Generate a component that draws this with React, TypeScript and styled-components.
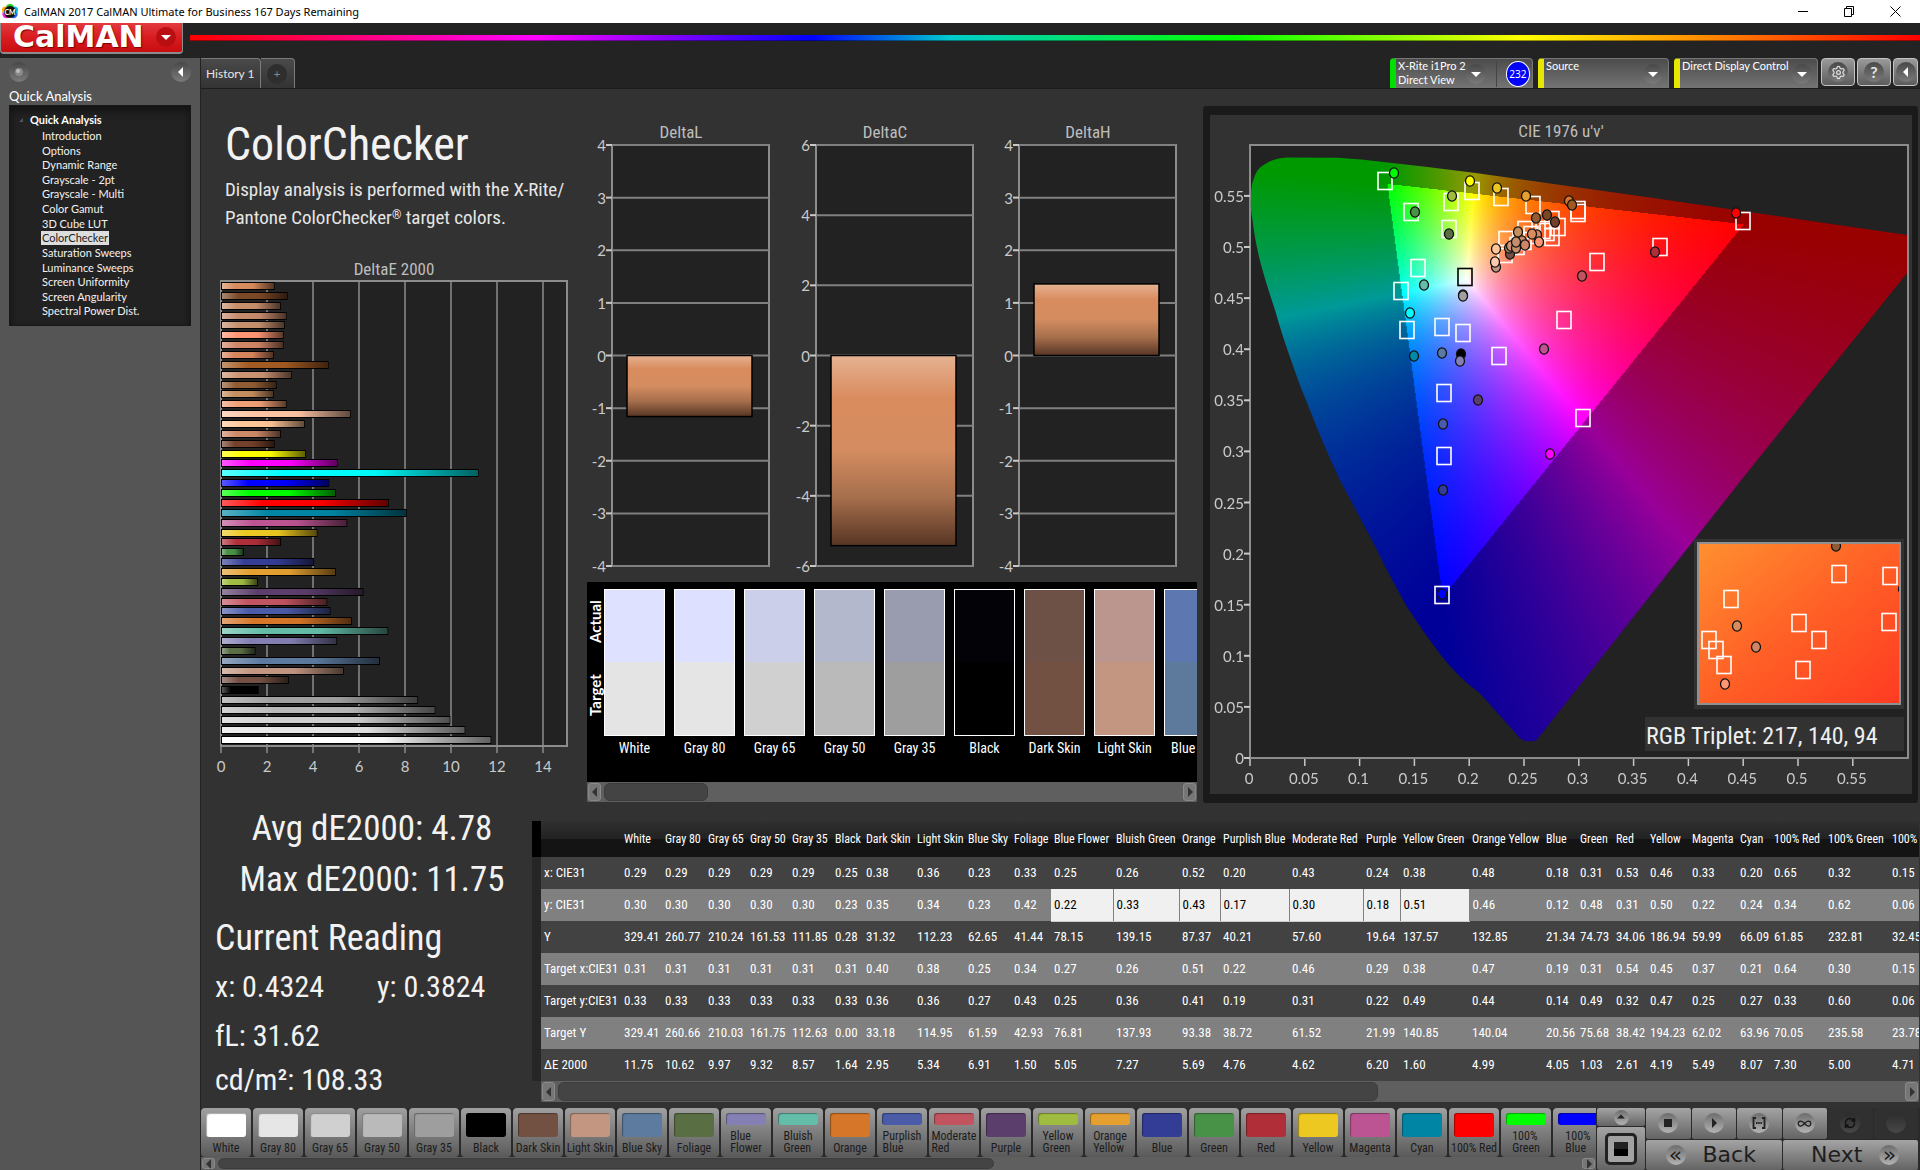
import React, { useEffect, useRef } from 'react';
import styled, { createGlobalStyle, css } from 'styled-components';
import { Settings, RefreshCw, Infinity as InfinityIcon } from 'lucide-react';

const cond = '"Roboto Condensed", "Liberation Sans Narrow", Lato, sans-serif';
const ui = 'Lato, "Open Sans", sans-serif';

const Global = createGlobalStyle`
  * { box-sizing: border-box; }
  body { margin: 0; background: #232323; font-family: ${ui}; color: #e6e6e6; }
  button { font: inherit; color: inherit; border: 0; padding: 0; margin: 0; background: none; }
  ul { list-style: none; margin: 0; padding: 0; }
  h1, h2, p { margin: 0; font-weight: 400; }
`;

/* ---------- shell ---------- */
const App_ = styled.div`
  display: flex;
  flex-direction: column;
  min-height: 100vh;
  overflow: hidden;
`;
const TitleBar = styled.header`
  display: flex;
  align-items: center;
  height: 23px;
  padding: 0 18px 0 2px;
  gap: 6px;
  background: #fff;
  color: #000;
  font: 11px/22px "Noto Sans", sans-serif;
`;
const AppName = styled.span`
  flex: 1;
`;
const WinButtons = styled.div`
  display: flex;
  gap: 33px;
`;
const WinButton = styled.button`
  display: flex;
  width: 13px;
  height: 20px;
  align-items: center;
  justify-content: center;
`;
const Brand = styled.div`
  display: flex;
  height: 35px;
  gap: 7px;
  background: #232323;
`;
const Logo = styled.button`
  display: flex;
  align-items: center;
  justify-content: space-between;
  width: 183px;
  height: 31px;
  padding: 0 6px 1px 12px !important;
  background: linear-gradient(#e23a3e, #d81c20 50%, #c80d10) !important;
  border: solid #8c8c8c !important;
  border-width: 0 1px 2px 1px !important;
  border-radius: 0 0 4px 4px;
  font: 700 30px/28px "DejaVu Sans", sans-serif !important;
  color: #fff !important;
  text-shadow: 1px 1px 1px #700;
`;
const Rainbow = styled.div`
  flex: 1;
  height: 6px;
  margin-top: 12px;
  border-bottom: 1px solid rgba(0, 0, 0, 0.4);
  background: linear-gradient(90deg, #f00 0, #f0f 20%, #00f 36%, #0cc 44%, #0f0 60%, #ff0 77%, #f00 100%);
`;
const Body = styled.div`
  display: flex;
  flex: 1;
`;

/* ---------- sidebar ---------- */
const Side = styled.aside`
  width: 200px;
  flex: none;
  padding: 4px 9px;
  background: #555;
`;
const SideTop = styled.div`
  display: flex;
  justify-content: space-between;
  align-items: center;
  height: 20px;
`;
const SideTitle = styled.h2`
  margin-top: 5px;
  font-size: 13px;
  line-height: 18px;
  color: #fff;
`;
const Tree = styled.div`
  height: 221px;
  padding: 7px 10px 7px 14px;
  background: #222;
  border: 1px solid #181818;
  box-shadow: inset 0 4px 8px #111;
`;
const TreeRoot = styled.div`
  display: flex;
  align-items: center;
  gap: 6px;
  height: 14px;
  margin-left: -6px;
  font: 700 11px/14px ${ui};
  color: #fff;
`;
const TreeList = styled.ul`
  display: grid;
  height: 192px;
  grid-auto-rows: 1fr;
  padding: 2px 0 0 17px !important;
  font-size: 11px;
  line-height: 14px;
`;
const TreeLink = styled.a<{ $on?: boolean }>`
  display: inline-block;
  padding: 0 1px;
  text-decoration: none;
  color: ${(p) => (p.$on ? '#222' : '#f2f2f2')};
  background: ${(p) => (p.$on ? '#ddd' : 'transparent')};
`;
const Knob = styled.span<{ $s?: number; $tone?: string }>`
  display: flex;
  flex: none;
  align-items: center;
  justify-content: center;
  width: ${(p) => p.$s ?? 20}px;
  height: ${(p) => p.$s ?? 20}px;
  border-radius: 50%;
  background: ${(p) => p.$tone ?? 'linear-gradient(#484848, #7a7a7a)'};
`;
const PlusKnob = styled(Knob)`
  background: #2e2e2e;
  color: #888;
`;
const PaleKnob = styled(Knob)<{ $off?: boolean }>`
  background: ${(p) => (p.$off ? 'linear-gradient(#2c2c2c,#484848)' : 'linear-gradient(#6c6c6c,#b4b4b4)')};
`;
const KnobButton = styled.button`
  display: flex;
`;

/* ---------- main ---------- */
const Main = styled.main`
  display: flex;
  flex: 1;
  min-width: 0;
  flex-direction: column;
  border-left: 1px solid #222;
  background: #323232;
`;
const TopBar = styled.div`
  display: flex;
  justify-content: space-between;
  height: 31px;
  background: #232323;
  border-bottom: 1px solid #1c1c1c;
`;
const Tabs = styled.div`
  display: flex;
`;
const Tab = styled.button`
  display: flex;
  align-items: center;
  justify-content: center;
  height: 30px;
  padding: 0 5px !important;
  min-width: 34px;
  background: linear-gradient(#4a4a4a, #333) !important;
  border: solid #7b7b7b !important;
  border-width: 1px 1px 0 0 !important;
  border-radius: 0 4px 0 0;
  font-size: 12px !important;
`;
const Tools = styled.div`
  display: flex;
`;
const Device = styled.button<{ $c: string; $w: number; $p?: number; $gap?: number }>`
  display: flex;
  width: ${(p) => p.$w}px;
  height: 30px;
  margin-right: ${(p) => p.$gap ?? 5}px !important;
  padding: 0 ${(p) => p.$p ?? 5}px 0 2px !important;
  border: solid #777 !important;
  border-width: 1px 1px 0 0 !important;
  border-left: 6px solid ${(p) => p.$c} !important;
  border-radius: 4px 4px 0 0;
  background: linear-gradient(#4c4c4c, #747474) !important;
  font-size: 11px !important;
  line-height: 14px !important;
  color: #fff !important;
  text-align: left;
  align-items: center;
  white-space: nowrap;
`;
const DeviceName = styled.span`
  flex: 1;
  align-self: flex-start;
`;
const Badge = styled.span`
  display: flex;
  align-items: center;
  justify-content: center;
  width: 26px;
  height: 26px;
  margin-left: 9px;
  border: 1px solid #fff;
  border-radius: 50%;
  background: #00f;
  font: 10px "Noto Sans", sans-serif;
`;
const Divider = styled.span`
  width: 1px;
  height: 26px;
  margin-left: 10px;
  background: #444;
`;
const ToolButton = styled.button<{ $w?: number }>`
  display: flex;
  align-items: center;
  justify-content: center;
  width: ${(p) => p.$w ?? 34}px;
  height: 28px;
  margin-right: 2px !important;
  border: 1px solid #c4c4c4 !important;
  border-radius: 4px;
  background: linear-gradient(#9a9a9a, #5c5c5c) !important;
  font: 700 16px/20px Lato, sans-serif !important;
`;
const Upper = styled.div`
  display: flex;
  padding: 17px 2px 0 0;
`;
const LeftCol = styled.section`
  width: 386px;
  flex: none;
`;
const Intro = styled.div`
  height: 148px;
  padding: 6px 0 0 24px;
  font-family: ${cond};
`;
const Heading = styled.h1`
  font-size: 46px;
  line-height: 64px;
  color: #f2f2f2;
`;
const Lead = styled.p`
  font-size: 19px;
  line-height: 28px;
  white-space: nowrap;
`;
const Mark = styled.span`
  font-size: 12px;
  line-height: 12px;
  vertical-align: 5px;
`;
const MidCol = styled.section`
  width: 610px;
  flex: none;
  margin-right: 6px;
`;
const Chart = styled.svg`
  display: block;
  width: 100%;
  height: auto;
`;

/* swatches */
const Strip = styled.div`
  display: flex;
  height: 200px;
  padding-top: 7px;
  overflow: hidden;
  background: #000;
`;
const Sides = styled.div`
  display: grid;
  flex: none;
  width: 17px;
  height: 147px;
  grid-template-rows: 66px 1fr;
`;
const SideLabel = styled.span`
  writing-mode: vertical-rl;
  transform: rotate(180deg);
  text-align: center;
  font: 700 15px/17px ${ui};
  color: #fff;
`;
const Patch = styled.figure`
  flex: none;
  width: 61px;
  margin: 0 9px 0 0;
  text-align: center;
  white-space: nowrap;
  font: 14px/24px ${cond};
  color: #fff;
`;
const PatchColor = styled.div<{ $a: string; $t: string }>`
  height: 147px;
  border: 1px solid #fff;
  background: linear-gradient(${(p) => p.$a} 50%, ${(p) => p.$t} 50%);
`;

/* scrollbars */
const Bar = styled.div<{ $h: number }>`
  display: flex;
  align-items: center;
  justify-content: space-between;
  gap: 3px;
  height: ${(p) => p.$h}px;
  padding: 1px;
  background: #5f5f5f;
`;
const BarButton = styled.button`
  display: flex;
  align-items: center;
  justify-content: center;
  width: 13px;
  height: 100%;
  border: 1px solid #8a8a8a !important;
  border-radius: 3px;
  background: #767676 !important;
`;
const Track = styled.div`
  flex: 1;
  height: 100%;
`;
const Thumb = styled.div<{ $w: string }>`
  width: ${(p) => p.$w};
  height: 100%;
  border-radius: 6px;
  background: #444;
  border: 1px solid #3c3c3c;
`;

const CiePanel = styled.section`
  flex: 1;
  min-width: 0;
  padding: 9px 6px 9px 7px;
  background: #1a1a1a;
  border-radius: 3px;
`;
const CieInner = styled.div`
  background: #323232;
`;
const Spectrum = styled.canvas`
  display: block;
  width: 100%;
  height: 100%;
`;

/* lower */
const Lower = styled.div`
  display: flex;
  height: 305px;
`;
const Readings = styled.section`
  width: 331px;
  flex: none;
  padding-left: 14px;
  font-family: ${cond};
  color: #f2f2f2;
`;
const Stat = styled.p`
  margin-left: 14px;
  width: 286px;
  text-align: center;
  font-size: 35px;
  line-height: 51px;
`;
const Reading = styled.p<{ $h: number; $s?: number }>`
  display: flex;
  font-size: ${(p) => p.$s ?? 30}px;
  line-height: ${(p) => p.$h}px;
`;
const Half = styled.span`
  width: 162px;
`;
const TableArea = styled.section`
  flex: 1;
  min-width: 0;
  display: flex;
  padding-top: 18px;
`;
const Gutter = styled.div`
  width: 9px;
  flex: none;
  height: 260px;
  background: linear-gradient(#000 0 36px, #262626 36px);
`;
const TableScroll = styled.div`
  flex: 1;
  min-width: 0;
  margin-right: 1px;
  overflow: hidden;
`;
const Table = styled.table`
  width: 1418px;
  table-layout: fixed;
  border-collapse: collapse;
  font: 13px/20px ${cond};
  color: #fff;
  th, td {
    height: 32px;
    padding: 0 0 0 3px;
    font-weight: 400;
    text-align: left;
    white-space: nowrap;
  }
  thead th {
    height: 36px;
    font-size: 12px;
  }
  thead tr {
    background: linear-gradient(#303030, #222 50%, #141414 51%, #141414);
  }
`;
const Row = styled.tr<{ $alt: boolean }>`
  background: ${(p) => (p.$alt ? '#808080' : '#424242')};
`;
const Cell = styled.td<{ $sel?: boolean }>`
  ${(p) =>
    p.$sel &&
    css`
      background: #f0f0f0;
      color: #000;
      border-right: 1px solid #808080;
      border-bottom: 1px solid #ccc;
    `}
`;

/* bottom */
const Footer = styled.footer`
  display: flex;
  flex: 1;
  min-height: 62px;
  padding-right: 2px;
  gap: 1px;
  background: #2a2a2a;
`;
const Palette = styled.div`
  flex: 1;
  min-width: 0;
`;
const PaletteRow = styled.div`
  display: flex;
  gap: 2px;
  overflow: hidden;
`;
const ColorButton = styled.button`
  display: flex;
  flex: none;
  flex-direction: column;
  align-items: center;
  justify-content: space-between;
  width: 50px;
  height: 49px;
  padding: 5px 0 3px !important;
  border-radius: 4px;
  background: linear-gradient(#a0a0a0, #5a5a5a) !important;
  font: 12px/12px ${cond} !important;
  color: #1c1c1c !important;
`;
const Chip = styled.span<{ $c: string }>`
  width: 40px;
  flex: 1;
  border-radius: 3px;
  background: ${(p) => p.$c};
  box-shadow: inset 1px 1px 1px rgba(0, 0, 0, 0.35);
`;
const ChipLabel = styled.span`
  padding-top: 5px;
  text-align: left;
`;
const Source = styled.div`
  display: grid;
  width: 48px;
  grid-template-rows: 18px 1fr;
  gap: 1px;
`;
const Metal = styled.button<{ $off?: boolean; $pad?: string }>`
  display: flex;
  align-items: center;
  justify-content: center;
  gap: 17px;
  padding: ${(p) => p.$pad ?? '0'} !important;
  border-radius: 2px;
  background: ${(p) => (p.$off ? '#303030' : 'linear-gradient(#a4a4a4, #646464)')} !important;
  font: 22px/28px "DejaVu Sans", sans-serif !important;
  color: #1e1e1e !important;
`;
const Frame = styled.span`
  display: flex;
  align-items: center;
  justify-content: center;
  width: 32px;
  height: 32px;
  border: 3px solid #222;
  border-radius: 5px;
  background: #a2a2a2;
`;
const Block = styled.span`
  width: 14px;
  height: 14px;
  background: linear-gradient(#222 50%, #000 50%);
`;
const Transport = styled.div`
  display: grid;
  width: 272px;
  grid-template-columns: repeat(6, 1fr);
  grid-template-rows: 1fr 1fr;
  gap: 1px;
  ${Metal}:nth-child(n + 7) {
    grid-column: span 3;
  }
`;

/* ---------- data ---------- */
const deltaE: [string, number][] = [
  ['#d98c5e', 2.33], ['#7b4826', 2.9], ['#c78e6b', 2.6], ['#c68a6c', 2.85], ['#c6906c', 2.77],
  ['#ff9673', 2.72], ['#d08666', 2.72], ['#d9855e', 2.29], ['#a35a22', 4.68], ['#cb9372', 3.07],
  ['#915c33', 2.42], ['#c58e5e', 2.29], ['#f0a075', 2.85], ['#ffc5a5', 5.64], ['#ffc798', 3.64],
  ['#cc8a68', 2.6], ['#74402a', 2.33], ['#ffff00', 3.68], ['#ff00ff', 5.07], ['#00ffff', 11.2],
  ['#0000ff', 4.71], ['#00ff00', 5], ['#ff0000', 7.3], ['#0086a4', 8.07], ['#bc5493', 5.49],
  ['#ecc820', 4.19], ['#b02e38', 2.61], ['#489247', 1], ['#343d96', 4.05], ['#e5a030', 4.99],
  ['#a0bc40', 1.6], ['#5c3e6c', 6.2], ['#c2545f', 4.62], ['#4a5ba8', 4.76], ['#d67628', 5.69],
  ['#64bda8', 7.27], ['#8580b4', 5.05], ['#5a6e44', 1.5], ['#5c7a9f', 6.91], ['#c39681', 5.34],
  ['#735043', 2.95], ['#000000', 1.64], ['#a0a0a0', 8.57], ['#bababa', 9.32], ['#d0d0d0', 9.97],
  ['#e6e6e6', 10.62], ['#ffffff', 11.75],
];

const patches: [string, string, string][] = [
  ['White', '#dee1ff', '#e4e4e4'], ['Gray 80', '#dde1ff', '#e5e5e5'], ['Gray 65', '#cbcfe9', '#d0d0d0'],
  ['Gray 50', '#b3b8cd', '#bababa'], ['Gray 35', '#999caf', '#9e9e9e'], ['Black', '#020207', '#000'],
  ['Dark Skin', '#6d5046', '#735142'], ['Light Skin', '#ba968e', '#c39681'], ['Blue Sky', '#5d78b0', '#5d7a9c'],
];

const columns: [string, number, string[]][] = [
  ['White', 41, ['0.29', '0.30', '329.41', '0.31', '0.33', '329.41', '11.75']],
  ['Gray 80', 43, ['0.29', '0.30', '260.77', '0.31', '0.33', '260.66', '10.62']],
  ['Gray 65', 42, ['0.29', '0.30', '210.24', '0.31', '0.33', '210.03', '9.97']],
  ['Gray 50', 42, ['0.29', '0.30', '161.53', '0.31', '0.33', '161.75', '9.32']],
  ['Gray 35', 43, ['0.29', '0.30', '111.85', '0.31', '0.33', '112.63', '8.57']],
  ['Black', 31, ['0.25', '0.23', '0.28', '0.31', '0.33', '0.00', '1.64']],
  ['Dark Skin', 51, ['0.38', '0.35', '31.32', '0.40', '0.36', '33.18', '2.95']],
  ['Light Skin', 51, ['0.36', '0.34', '112.23', '0.38', '0.36', '114.95', '5.34']],
  ['Blue Sky', 46, ['0.23', '0.23', '62.65', '0.25', '0.27', '61.59', '6.91']],
  ['Foliage', 40, ['0.33', '0.42', '41.44', '0.34', '0.43', '42.93', '1.50']],
  ['Blue Flower', 62, ['0.25', '0.22', '78.15', '0.27', '0.25', '76.81', '5.05']],
  ['Bluish Green', 66, ['0.26', '0.33', '139.15', '0.26', '0.36', '137.93', '7.27']],
  ['Orange', 41, ['0.52', '0.43', '87.37', '0.51', '0.41', '93.38', '5.69']],
  ['Purplish Blue', 69, ['0.20', '0.17', '40.21', '0.22', '0.19', '38.72', '4.76']],
  ['Moderate Red', 74, ['0.43', '0.30', '57.60', '0.46', '0.31', '61.52', '4.62']],
  ['Purple', 37, ['0.24', '0.18', '19.64', '0.29', '0.22', '21.99', '6.20']],
  ['Yellow Green', 69, ['0.38', '0.51', '137.57', '0.38', '0.49', '140.85', '1.60']],
  ['Orange Yellow', 74, ['0.48', '0.46', '132.85', '0.47', '0.44', '140.04', '4.99']],
  ['Blue', 34, ['0.18', '0.12', '21.34', '0.19', '0.14', '20.56', '4.05']],
  ['Green', 36, ['0.31', '0.48', '74.73', '0.31', '0.49', '75.68', '1.03']],
  ['Red', 34, ['0.53', '0.31', '34.06', '0.54', '0.32', '38.42', '2.61']],
  ['Yellow', 42, ['0.46', '0.50', '186.94', '0.45', '0.47', '194.23', '4.19']],
  ['Magenta', 48, ['0.33', '0.22', '59.99', '0.37', '0.25', '62.02', '5.49']],
  ['Cyan', 34, ['0.20', '0.24', '66.09', '0.21', '0.27', '63.96', '8.07']],
  ['100% Red', 54, ['0.65', '0.34', '61.85', '0.64', '0.33', '70.05', '7.30']],
  ['100% Green', 64, ['0.32', '0.62', '232.81', '0.30', '0.60', '235.58', '5.00']],
  ['100% Blue', 70, ['0.15', '0.06', '32.45', '0.15', '0.06', '23.78', '4.71']],
];
const rowNames = ['x: CIE31', 'y: CIE31', 'Y', 'Target x:CIE31', 'Target y:CIE31', 'Target Y', 'ΔE 2000'];

const palette: [string, string][] = [
  ['White', '#fff'], ['Gray 80', '#e6e6e6'], ['Gray 65', '#d0d0d0'], ['Gray 50', '#bababa'], ['Gray 35', '#9e9e9e'],
  ['Black', '#000'], ['Dark Skin', '#735142'], ['Light Skin', '#c39681'], ['Blue Sky', '#5d7a9f'], ['Foliage', '#5a6e44'],
  ['Blue\nFlower', '#8580b4'], ['Bluish\nGreen', '#64bda8'], ['Orange', '#d67628'], ['Purplish\nBlue', '#4a5ba8'],
  ['Moderate\nRed', '#c2545f'], ['Purple', '#5c3e6c'], ['Yellow\nGreen', '#a0bc40'], ['Orange\nYellow', '#e5a030'],
  ['Blue', '#343d96'], ['Green', '#489247'], ['Red', '#b02e38'], ['Yellow', '#ecc820'], ['Magenta', '#bc5493'],
  ['Cyan', '#0086a4'], ['100% Red', '#f00'], ['100%\nGreen', '#0f0'], ['100%\nBlue', '#00f'],
];

const targets: [number, number][] = [
  [135, 36], [222, 46], [251, 52], [201, 57], [161, 67], [283, 60], [328, 65], [328, 68], [199, 84], [493, 76],
  [410, 102], [347, 117], [168, 123], [151, 146], [157, 185], [192, 182], [213, 188], [314, 175], [249, 211],
  [194, 248], [333, 273], [194, 311], [192, 450], [302, 75], [308, 82], [302, 92], [275, 85], [256, 95],
  [255, 109], [267, 101], [281, 90], [274, 96], [293, 85], [297, 87],
];
const readings: [number, number, string][] = [
  [144, 28, '#00ff00'], [220, 36, '#ffff00'], [247, 43, '#ecc820'], [202, 51, '#a0bc40'], [276, 51, '#e5a030'],
  [319, 56, '#d67628'], [322, 60, '#a35a22'], [165, 67, '#489247'], [486, 68, '#ff0000'], [199, 89, '#5a6e44'],
  [297, 70, '#7b4826'], [286, 73, '#915c33'], [305, 77, '#74402a'], [268, 87, '#c58e5e'], [287, 90, '#d9855e'],
  [282, 89, '#d98c5e'], [289, 97, '#ff9673'], [272, 96, '#c68a6c'], [260, 109, '#735043'], [259, 103, '#a87a5c'],
  [261, 101, '#cb9372'], [266, 103, '#c6906c'], [275, 100, '#d08666'], [266, 97, '#c78e6b'], [246, 104, '#ffc798'],
  [246, 122, '#c39681'], [245, 117, '#ffcbb0'], [405, 107, '#b02e38'], [332, 131, '#c2545f'], [174, 140, '#64bda8'],
  [213, 150, '#808080'], [213, 151, '#a0a0a0'], [160, 168, '#00ffff'], [164, 211, '#008aa8'], [192, 208, '#5c7a9f'],
  [211, 209, '#000'], [210, 216, '#8580b4'], [294, 204, '#bc5493'], [228, 255, '#5c3e6c'], [193, 279, '#4a5ba8'],
  [300, 309, '#ff00ff'], [193, 345, '#343d96'], [192, 449, '#0000ff'],
];
const insetTargets: [number, number][] = [
  [142, 32], [193, 34], [34, 57], [102, 81], [192, 80], [12, 98], [122, 98], [19, 108], [27, 123], [106, 128],
];
const insetReadings: [number, number, string][] = [
  [139, 4, '#915c33'], [40, 84, '#d98c5e'], [59, 105, '#d08666'], [28, 142, '#ff9673'], [206, 47, '#74402a'],
];

/* ---------- charts ---------- */
const axis = { fill: '#cacaca', fontFamily: ui, fontSize: 15 } as const;
const title = { fill: '#bebebe', fontFamily: cond, fontSize: 17, textAnchor: 'middle' } as const;

function DeltaEChart() {
  return (
    <Chart viewBox="0 0 386 530" role="img" aria-label="DeltaE 2000 by colour">
      <defs>
        <linearGradient id="shade">
          <stop offset="0" stopColor="#fff" stopOpacity=".35" />
          <stop offset=".25" stopColor="#fff" stopOpacity="0" />
          <stop offset=".6" stopColor="#000" stopOpacity=".03" />
          <stop offset="1" stopColor="#000" stopOpacity=".62" />
        </linearGradient>
      </defs>
      <text x="193" y="21" {...title}>DeltaE 2000</text>
      <rect x="20" y="27" width="346" height="465" fill="#222" stroke="#8c8c8c" strokeWidth="2" />
      {[0, 2, 4, 6, 8, 10, 12, 14].map((v) => (
        <g key={v}>
          <line x1={20 + v * 23} x2={20 + v * 23} y1={v ? 27 : 492} y2="499" stroke="#8c8c8c" strokeWidth="1.5" />
          <text x={20 + v * 23} y="518" textAnchor="middle" {...axis}>{v}</text>
        </g>
      ))}
      {deltaE.map(([c, v], i) => (
        <g key={i}>
          <rect x="20" y={28 + Math.round(i * 9.86)} width={v * 23} height="8" fill="#000" />
          <rect x="21" y={29 + Math.round(i * 9.86)} width={v * 23 - 2} height="6" fill={c} />
          <rect x="21" y={29 + Math.round(i * 9.86)} width={v * 23 - 2} height="6" fill="url(#shade)" />
        </g>
      ))}
    </Chart>
  );
}

function DeltaPlot({ x, name, max, step, value }: { x: number; name: string; max: number; step: number; value: number }) {
  const ticks: number[] = [];
  for (let v = max; v >= -max; v -= step) ticks.push(v);
  const y = (v: number) => 39 + ((max - v) / (2 * max)) * 421;
  const top = Math.min(y(0), y(value));
  const h = Math.abs(y(value) - y(0));
  return (
    <g transform={`translate(${x} 0)`}>
      <text x="69" y="32" {...title}>{name}</text>
      <rect width="157" y="39" height="421" fill="#222" stroke="#8c8c8c" strokeWidth="2" />
      {ticks.map((v) => (
        <g key={v}>
          <line x1="0" x2="157" y1={y(v)} y2={y(v)} stroke="#808080" strokeWidth="2" />
          <line x1="-6" x2="0" y1={y(v)} y2={y(v)} stroke="#c8c8c8" strokeWidth="2" />
          <text x="-6" y={y(v) + 6} textAnchor="end" {...axis}>{v}</text>
        </g>
      ))}
      <rect x="15" y={top} width="125" height={h} fill="url(#skin)" stroke="#000" strokeWidth="1.5" />
    </g>
  );
}

const locus =
  'M278 596 Q272 597 265 587 L230 548 Q208 532 191 510 Q172 485 156 460 Q138 428 122 395 L90 335 Q72 297 60 265 Q50 242 42 218 Q32 190 25 165 Q14 132 9 112 Q4 90 2.5 75 Q0 62 1 51 Q1 40 4 33 Q7 24 12 21 Q22 13 37 12.500 L88 12.700 Q112 14 134 17 Q180 22 226 28 L404 53 L658 90 L658 128 L492 335 L287 595 Q283 597 278 596 Z';

function paintSpectrum(canvas: HTMLCanvasElement) {
  const w = 658;
  const h = 613;
  canvas.width = w;
  canvas.height = h;
  const buffer = document.createElement('canvas');
  buffer.width = w;
  buffer.height = h;
  const bctx = buffer.getContext('2d')!;
  const img = bctx.createImageData(w, h);
  for (let py = 0; py < h; py++) {
    for (let px = 0; px < w; px++) {
      const u = px / 1096;
      const v = Math.max(0.6 - py / 1022, 0.001);
      const X = (9 * u) / (4 * v);
      const Z = (12 - 3 * u - 20 * v) / (4 * v);
      const r = 3.2406 * X - 1.5372 - 0.4986 * Z;
      const g = -0.9689 * X + 1.8758 + 0.0415 * Z;
      const b = 0.0557 * X - 0.204 + 1.057 * Z;
      const m = Math.max(r, g, b, 0.0001);
      const k = (r < 0 || g < 0 || b < 0 ? 153 : 255) / m;
      const o = (py * w + px) * 4;
      img.data[o] = Math.max(0, r) * k;
      img.data[o + 1] = Math.max(0, g) * k;
      img.data[o + 2] = Math.max(0, b) * k;
      img.data[o + 3] = 255;
    }
  }
  bctx.putImageData(img, 0, 0);
  const ctx = canvas.getContext('2d')!;
  ctx.clip(new Path2D(locus));
  ctx.drawImage(buffer, 0, 0);
}

const Target = ({ x, y, c = '#fff' }: { x: number; y: number; c?: string }) => (
  <rect x={x - 7} y={y - 8.5} width="14" height="17" fill="none" stroke={c} strokeWidth="1.600" />
);
const Dot = ({ x, y, c }: { x: number; y: number; c: string }) => (
  <ellipse cx={x} cy={y} rx="4.500" ry="5.200" fill={c} stroke="#111" strokeWidth="1.300" />
);

function CieChart() {
  const ref = useRef<HTMLCanvasElement>(null);
  useEffect(() => {
    if (ref.current) paintSpectrum(ref.current);
  }, []);
  const steps = Array.from({ length: 12 }, (_, i) => i * 0.05);
  return (
    <Chart viewBox="0 0 702 679" role="img" aria-label="CIE 1976 chromaticity diagram">
      <defs>
        <linearGradient id="insetA" x2="1" y2="1">
          <stop offset="0" stopColor="#ff9030" />
          <stop offset=".5" stopColor="#ff6026" />
          <stop offset="1" stopColor="#ff3a22" />
        </linearGradient>
        <clipPath id="insetClip"><rect width="204" height="163" /></clipPath>
      </defs>
      <text x="351" y="22" {...title}>CIE 1976 u'v'</text>
      <rect x="40" y="30" width="658" height="613" fill="#222" stroke="#8c8c8c" strokeWidth="2" />
      <foreignObject x="40" y="30" width="657" height="613"><Spectrum ref={ref} /></foreignObject>
      {steps.map((v) => (
        <g key={v}>
          <line x1="34" x2="40" y1={643 - v * 1022} y2={643 - v * 1022} stroke="#c8c8c8" strokeWidth="2" />
          <text x="34" y={649 - v * 1022} textAnchor="end" {...axis}>{+v.toFixed(2)}</text>
          <line x1={40 + v * 1096} x2={40 + v * 1096} y1="644" y2="651" stroke="#c8c8c8" strokeWidth="1.500" />
          <text x={39 + v * 1096} y="669" textAnchor="middle" {...axis}>{+v.toFixed(2)}</text>
        </g>
      ))}
      <g transform="translate(40 30)">
        {targets.map(([x, y], i) => <Target key={i} x={x} y={y} />)}
        <Target x={215} y={132} c="#000" />
        {readings.map(([x, y, c], i) => <Dot key={i} x={x} y={y} c={c} />)}
      </g>
      <rect x="484" y="424" width="210" height="170" fill="#323232" />
      <g transform="translate(487 427)" clipPath="url(#insetClip)">
        <rect width="204" height="163" fill="url(#insetA)" />
        {insetTargets.map(([x, y], i) => <Target key={i} x={x} y={y} />)}
        {insetReadings.map(([x, y, c], i) => <Dot key={i} x={x} y={y} c={c} />)}
        <rect x="1" y="1" width="202" height="161" fill="none" stroke="#909090" strokeWidth="2" />
      </g>
      <rect x="435" y="602" width="259" height="34" fill="#323232" />
      <text x="436" y="629" fill="#eee" fontFamily={cond} fontSize="24">RGB Triplet: 217, 140, 94</text>
    </Chart>
  );
}

const Arrow = ({ d, c = '#fff', s = 10 }: { d: 'l' | 'r' | 'd' | 'u'; c?: string; s?: number }) => (
  <svg width={s} height={s} viewBox="0 0 10 10" aria-hidden>
    <path fill={c} d={{ l: 'M7 0V10L2 5Z', r: 'M3 0V10L8 5Z', d: 'M0 3H10L5 8Z', u: 'M0 7H10L5 2Z' }[d]} />
  </svg>
);

function Scrollbar({ h, thumb }: { h: number; thumb: string }) {
  return (
    <Bar $h={h}>
      <BarButton aria-label="Scroll left"><Arrow d="l" c="#333" /></BarButton>
      <Track><Thumb $w={thumb} /></Track>
      <BarButton aria-label="Scroll right"><Arrow d="r" c="#333" /></BarButton>
    </Bar>
  );
}

export default function App() {
  return (
    <App_>
      <Global />
      <TitleBar>
        <svg width="16" height="18" viewBox="0 0 16 18" aria-hidden>
          <circle cx="8" cy="5" r="4" fill="#2c2" /><circle cx="4.500" cy="11" r="4.200" fill="#e2c" />
          <circle cx="11.500" cy="11" r="4.200" fill="#26f" /><circle cx="3.500" cy="7" r="3.500" fill="#fa0" />
          <circle cx="12.500" cy="7" r="3.500" fill="#0bd" /><circle cx="8" cy="9" r="6" fill="#111" />
          <text x="8" y="11.500" fontSize="7" fontWeight="700" fill="#fff" textAnchor="middle" fontFamily="Lato">CM</text>
        </svg>
        <AppName>CalMAN 2017 CalMAN Ultimate for Business 167 Days Remaining</AppName>
        <WinButtons>
          <WinButton aria-label="Minimize"><svg width="11" height="11"><path d="M0 5.500H10" stroke="#000" /></svg></WinButton>
          <WinButton aria-label="Restore"><svg width="11" height="11" fill="none" stroke="#000"><path d="M.5 2.500H7.500V10.500H.5ZM2.500 2.500V.5H9.500V8.500H7.500" /></svg></WinButton>
          <WinButton aria-label="Close"><svg width="11" height="11"><path d="M.5 .5L10.500 10.500M10.500 .5L.5 10.500" stroke="#000" /></svg></WinButton>
        </WinButtons>
      </TitleBar>
      <Brand>
        <Logo>CalMAN<Knob $tone="#b90f12"><Arrow d="d" /></Knob></Logo>
        <Rainbow />
      </Brand>
      <Body>
        <Side>
          <SideTop>
            <Knob>
              <svg width="10" height="10"><circle cx="5" cy="5" r="4" fill="#8a8a8a" /><circle cx="4" cy="4" r="2" fill="#bbb" /></svg>
            </Knob>
            <KnobButton aria-label="Collapse"><Knob><Arrow d="l" /></Knob></KnobButton>
          </SideTop>
          <SideTitle>Quick Analysis</SideTitle>
          <Tree>
            <TreeRoot><svg width="6" height="6"><path d="M5 1V5H1Z" fill="#555" /></svg>Quick Analysis</TreeRoot>
            <TreeList>
              {['Introduction', 'Options', 'Dynamic Range', 'Grayscale - 2pt', 'Grayscale - Multi', 'Color Gamut', '3D Cube LUT',
                'ColorChecker', 'Saturation Sweeps', 'Luminance Sweeps', 'Screen Uniformity', 'Screen Angularity', 'Spectral Power Dist.'].map((t) => (
                <li key={t}><TreeLink href="#" $on={t === 'ColorChecker'}>{t}</TreeLink></li>
              ))}
            </TreeList>
          </Tree>
        </Side>
        <Main>
          <TopBar>
            <Tabs>
              <Tab>History 1</Tab>
              <Tab aria-label="Add history"><PlusKnob>+</PlusKnob></Tab>
            </Tabs>
            <Tools>
              <Device $c="#00e000" $w={143} $p={2}>
                <DeviceName>X-Rite i1Pro 2<br />Direct View</DeviceName><Knob><Arrow d="d" /></Knob><Divider /><Badge>232</Badge>
              </Device>
              <Device $c="#e6e600" $w={131}><DeviceName>Source</DeviceName><Knob><Arrow d="d" /></Knob></Device>
              <Device $c="#e6e600" $w={144} $gap={3}><DeviceName>Direct Display Control</DeviceName><Knob><Arrow d="d" /></Knob></Device>
              <ToolButton aria-label="Settings"><Knob><Settings size={15} color="#ddd" /></Knob></ToolButton>
              <ToolButton aria-label="Help"><Knob>?</Knob></ToolButton>
              <ToolButton aria-label="Collapse" $w={25}><Knob><Arrow d="l" /></Knob></ToolButton>
            </Tools>
          </TopBar>
          <Upper>
            <LeftCol>
              <Intro>
                <Heading>ColorChecker</Heading>
                <Lead>Display analysis is performed with the X-Rite/<br />Pantone ColorChecker<Mark>®</Mark> target colors.</Lead>
              </Intro>
              <DeltaEChart />
            </LeftCol>
            <MidCol>
              <Chart viewBox="0 0 610 476" role="img" aria-label="DeltaL, DeltaC and DeltaH">
                <defs>
                  <linearGradient id="skin" x2="0" y2="1">
                    <stop offset="0" stopColor="#e6b292" /><stop offset=".22" stopColor="#d98c5e" />
                    <stop offset=".5" stopColor="#d48c60" /><stop offset=".75" stopColor="#a56e4c" />
                    <stop offset="1" stopColor="#573524" />
                  </linearGradient>
                </defs>
                <DeltaPlot x={25} name="DeltaL" max={4} step={1} value={-1.16} />
                <DeltaPlot x={229} name="DeltaC" max={6} step={2} value={-5.42} />
                <DeltaPlot x={432} name="DeltaH" max={4} step={1} value={1.36} />
              </Chart>
              <Strip>
                <Sides><SideLabel>Actual</SideLabel><SideLabel>Target</SideLabel></Sides>
                {patches.map(([n, a, t]) => (
                  <Patch key={n}><PatchColor $a={a} $t={t} /><figcaption>{n}</figcaption></Patch>
                ))}
              </Strip>
              <Scrollbar h={20} thumb="104px" />
            </MidCol>
            <CiePanel><CieInner><CieChart /></CieInner></CiePanel>
          </Upper>
          <Lower>
            <Readings>
              <Stat>Avg dE2000: 4.78</Stat>
              <Stat>Max dE2000: 11.75</Stat>
              <Reading $h={66} $s={36}>Current Reading</Reading>
              <Reading $h={32}><Half>x: 0.4324</Half><span>y: 0.3824</span></Reading>
              <Reading $h={66}>fL: 31.62</Reading>
              <Reading $h={22}>cd/m²: 108.33</Reading>
            </Readings>
            <TableArea>
              <Gutter />
              <TableScroll>
                <Table>
                  <colgroup><col width={80} />{columns.map(([n, w]) => <col key={n} width={w} />)}</colgroup>
                  <thead><tr><th aria-label="Measure" />{columns.map(([n]) => <th key={n} scope="col">{n}</th>)}</tr></thead>
                  <tbody>
                    {rowNames.map((r, i) => (
                      <Row key={r} $alt={i % 2 === 1}>
                        <th scope="row">{r}</th>
                        {columns.map(([n, , vals], c) => <Cell key={n} $sel={i === 1 && c >= 10 && c <= 16}>{vals[i]}</Cell>)}
                      </Row>
                    ))}
                  </tbody>
                </Table>
                <Scrollbar h={21} thumb="61%" />
              </TableScroll>
            </TableArea>
          </Lower>
          <Footer>
            <Palette>
              <PaletteRow>
                {palette.map(([n, c]) => (
                  <ColorButton key={n}>
                    <Chip $c={c} />
                    <ChipLabel>{n.split('\n').map((l, i) => <React.Fragment key={l}>{i > 0 && <br />}{l}</React.Fragment>)}</ChipLabel>
                  </ColorButton>
                ))}
              </PaletteRow>
              <Scrollbar h={13} thumb="57%" />
            </Palette>
            <Source>
              <Metal aria-label="Expand"><PaleKnob $s={15}><Arrow d="u" c="#222" s={8} /></PaleKnob></Metal>
              <Metal aria-label="Pattern window"><Frame><Block /></Frame></Metal>
            </Source>
            <Transport>
              <Metal aria-label="Stop"><PaleKnob><svg width="8" height="8"><rect width="8" height="8" fill="#222" /></svg></PaleKnob></Metal>
              <Metal aria-label="Play"><PaleKnob><Arrow d="r" c="#222" /></PaleKnob></Metal>
              <Metal aria-label="Read series"><PaleKnob><svg width="14" height="12" fill="none" stroke="#222" strokeWidth="1.800"><path d="M4 1H1.500V11H4M10 1H12.500V11H10" /><path d="M4 6H10" strokeDasharray="1.500 .7" /></svg></PaleKnob></Metal>
              <Metal aria-label="Read continuous"><PaleKnob><InfinityIcon size={15} /></PaleKnob></Metal>
              <Metal aria-label="Refresh" $off><PaleKnob $off><RefreshCw size={12} color="#111" strokeWidth={3} /></PaleKnob></Metal>
              <Metal aria-label="Unused" $off><PaleKnob $off /></Metal>
              <Metal $pad="0 6px 0 0"><PaleKnob>«</PaleKnob>Back</Metal>
              <Metal $pad="0 0 0 10px">Next<PaleKnob>»</PaleKnob></Metal>
            </Transport>
          </Footer>
        </Main>
      </Body>
    </App_>
  );
}
